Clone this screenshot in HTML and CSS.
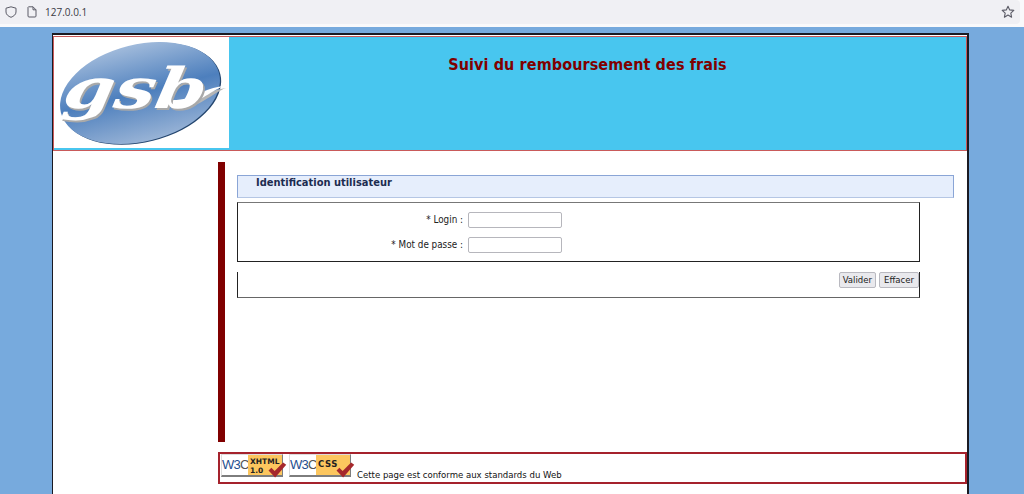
FILE: index.html
```html
<!DOCTYPE html>
<html lang="fr">
<head>
<meta charset="utf-8">
<title>Suivi du remboursement des frais</title>
<link rel="stylesheet" href="styles.css">
</head>
<body>
<div class="chrome">
  <div class="urlbar">
    <svg class="shield" width="12" height="12" viewBox="0 0 12 12"><path d="M6 .8 L11 2.2 V6 C11 8.6 8.6 10.3 6 11.3 C3.4 10.3 1 8.6 1 6 V2.2 Z" fill="none" stroke="#5b5b66" stroke-width="1" stroke-linejoin="round"/></svg>
    <svg class="doc" width="10" height="12" viewBox="0 0 10 12"><path d="M1.5 .8 H6 L9 3.8 V10 Q9 11 8 11 H2 Q1 11 1 10 V1.3 Z M6 .8 V3.8 H9" fill="none" stroke="#5b5b66" stroke-width="1" stroke-linejoin="round"/></svg>
    <span class="url">127.0.0.1</span>
    <svg class="star" width="14" height="14" viewBox="0 0 14 14"><path d="M7 1.2 L8.7 4.9 L12.8 5.4 L9.8 8.1 L10.6 12.2 L7 10.1 L3.4 12.2 L4.2 8.1 L1.2 5.4 L5.3 4.9 Z" fill="none" stroke="#5b5b66" stroke-width="1.1" stroke-linejoin="round"/></svg>
  </div>
</div>
<div class="viewport">
  <div class="page">
    <header class="banner">
      <div class="logo">
        <svg width="175" height="111" viewBox="0 0 175 111">
          <defs>
            <linearGradient id="oval" x1="0" y1="0" x2="0" y2="1">
              <stop offset="0" stop-color="#a0badb"/>
              <stop offset="0.5" stop-color="#4d7fbd"/>
              <stop offset="1" stop-color="#98b3d6"/>
            </linearGradient>
          </defs>
          <g transform="rotate(-14 86 56)">
            <ellipse cx="87" cy="57" rx="81.5" ry="48.5" fill="#24466f"/>
            <ellipse cx="86" cy="56" rx="81.5" ry="48.5" fill="url(#oval)"/>
          </g>
          <path d="M118 66 C140 66 150 54 172 51 C156 57 142 75 118 71 Z" fill="#b5b5b5"/>
          <path d="M116 63 C140 64 148 51 170 49 C155 54 142 71 116 68 Z" fill="#fff"/>
          <g transform="translate(7 71) skewX(-10) scale(1.3 1)">
            <text x="1.5" y="2" class="logo-text shadow">gsb</text>
            <text x="0" y="0" class="logo-text">gsb</text>
          </g>
        </svg>
      </div>
      <h1 class="title">Suivi du remboursement des frais</h1>
    </header>
    <div class="body-row">
      <main class="main">
        <h2 class="section-title">Identification utilisateur</h2>
        <form class="login">
          <div class="fields">
            <div class="field"><label class="label" for="login">* Login :</label><input class="input" id="login" type="text"></div>
            <div class="field"><label class="label" for="mdp">* Mot de passe :</label><input class="input" id="mdp" type="password"></div>
          </div>
          <div class="actions">
            <button class="btn btn-narrow" type="button">Valider</button>
            <button class="btn" type="button">Effacer</button>
          </div>
        </form>
      </main>
      <footer class="footer">
        <span class="badge">
          <span class="w3c">W3<i>C</i></span>
          <span class="badge-tag">XHTML<br>1.0</span>
          <svg class="check" width="20" height="16" viewBox="0 0 20 17"><path d="M1 9 L4 6 L7.5 9.5 L16.5 0.5 L19.8 3 L8 16.5 Z" fill="#a5282c"/></svg>
        </span>
        <span class="badge">
          <span class="w3c">W3<i>C</i></span>
          <span class="badge-tag css">CSS</span>
          <svg class="check" width="20" height="16" viewBox="0 0 20 17"><path d="M1 9 L4 6 L7.5 9.5 L16.5 0.5 L19.8 3 L8 16.5 Z" fill="#a5282c"/></svg>
        </span>
        <span class="conform">Cette page est conforme aux standards du Web</span>
      </footer>
    </div>
  </div>
</div>
</body>
</html>
```
FILE: styles.css
```css
html, body {
  margin: 0;
  height: 494px;
  overflow: hidden;
}
body {
  font-family: "DejaVu Sans Condensed", "DejaVu Sans", sans-serif;
  font-stretch: condensed;
  font-size: 9.5px;
  color: #000;
  background: #77aadd;
}
.chrome {
  box-sizing: border-box;
  height: 27px;
  padding: 0 4px 3px 0;
  background: #f9f9fb;
}
.urlbar {
  display: flex;
  align-items: center;
  height: 24px;
  padding: 0 5px 0 5px;
  background: #f0f0f4;
  border-radius: 0 4px 4px 0;
}
.doc { margin-left: 10px; }
.url {
  flex: 1;
  margin-left: 8px;
  font-family: "Open Sans", sans-serif;
  font-stretch: normal;
  font-size: 10px;
  color: #3a3a44;
}
.viewport {
  padding: 6px 55px 0 52px;
}
.page {
  box-sizing: border-box;
  width: 917px;
  height: 470px;
  padding: 1px 0 0;
  background: #fff;
  border: solid #1a1a22;
  border-width: 2px 2px 0 1px;
}
.banner {
  display: flex;
  box-sizing: border-box;
  height: 115px;
  background: #48c6ef;
  border: 1px solid #c95a5a;
  padding-bottom: 2px;
}
.logo {
  width: 175px;
  height: 111px;
  flex: none;
  background: #fff;
}
.logo svg { display: block; }
.logo-text {
  font-family: "DejaVu Serif", serif;
  font-stretch: normal;
  font-weight: 700;
  font-style: italic;
  font-size: 56px;
  fill: #fff;
}
.logo-text.shadow { fill: #a9a9a9; }
.title {
  flex: 1;
  margin: 18px 20px 0 0;
  text-align: center;
  font-size: 16px;
  font-weight: 700;
  letter-spacing: 0.1px;
  color: #800000;
}
.body-row {
  padding: 11px 0 0 165px;
}
.main {
  box-sizing: border-box;
  height: 280px;
  padding: 13px 13px 0 12px;
  border-left: 7px solid #800000;
}
.section-title {
  box-sizing: border-box;
  height: 23px;
  margin: 0 0 4px;
  padding: 0 0 0 18px;
  font-size: 11px;
  line-height: 13px;
  font-weight: 700;
  color: #1c2c50;
  background: #e6eefc;
  border: 1px solid #8aa5d6;
  border-bottom-color: #b5c6e4;
}
.login { width: 683px; }
.fields {
  box-sizing: border-box;
  height: 60px;
  padding: 8px 0 0;
  border: 1px solid #222;
  border-top-color: #777;
}
.field {
  display: flex;
  align-items: center;
  height: 17px;
  margin-bottom: 8px;
}
.label {
  box-sizing: border-box;
  width: 230px;
  padding-right: 5px;
  text-align: right;
  font-size: 9.8px;
  color: #222;
}
.input {
  box-sizing: border-box;
  width: 94px;
  height: 16px;
  margin: 0;
  padding: 0 2px;
  background: #fff;
  border: 1px solid #b6b6bc;
  border-radius: 2px;
}
.actions {
  box-sizing: border-box;
  display: flex;
  justify-content: flex-end;
  align-items: flex-start;
  gap: 3px;
  height: 26px;
  margin-top: 10px;
  border: 1px solid #222;
  border-top: 0;
  border-bottom-color: #666;
}
.btn {
  box-sizing: border-box;
  height: 16px;
  margin: 0;
  padding: 0 4px;
  font-family: "DejaVu Sans Condensed", "DejaVu Sans", sans-serif;
  font-stretch: condensed;
  font-size: 9.5px;
  line-height: 12px;
  color: #222;
  background: #e9e9ed;
  border: 1px solid #b9b9c0;
  border-radius: 2px;
}
.btn-narrow { padding: 0 3px; }
.footer {
  box-sizing: border-box;
  display: flex;
  align-items: flex-end;
  gap: 6px;
  width: 749px;
  height: 32px;
  margin-top: 10px;
  padding: 0 0 2px 1px;
  border: 2px solid #a5222c;
}
.badge {
  position: relative;
  box-sizing: border-box;
  display: flex;
  width: 62px;
  height: 23px;
  margin-bottom: 3px;
  background: #fff;
  border: 1px solid #dcdcdc;
  border-bottom: 2px solid #7d7d7d;
  border-right: 1px solid #7d7d7d;
}
.w3c {
  width: 26px;
  flex: none;
  font-family: "Liberation Sans", sans-serif;
  font-stretch: normal;
  font-size: 13px;
  line-height: 20px;
  letter-spacing: -0.8px;
  text-align: center;
  color: #1f4f90;
}
.w3c i {
  font-style: normal;
  color: #555;
}
.badge-tag {
  flex: 1;
  padding: 2px 0 0 2px;
  font-family: "DejaVu Sans", sans-serif;
  font-stretch: normal;
  font-size: 7.5px;
  line-height: 9px;
  font-weight: 700;
  color: #222;
  background: #fcc65e;
}
.badge-tag.css {
  padding-top: 5px;
  font-size: 8.5px;
  letter-spacing: 0.5px;
}
.check {
  position: absolute;
  right: -5px;
  bottom: -3px;
}
.conform {
  line-height: 11px;
  color: #111;
}
```
